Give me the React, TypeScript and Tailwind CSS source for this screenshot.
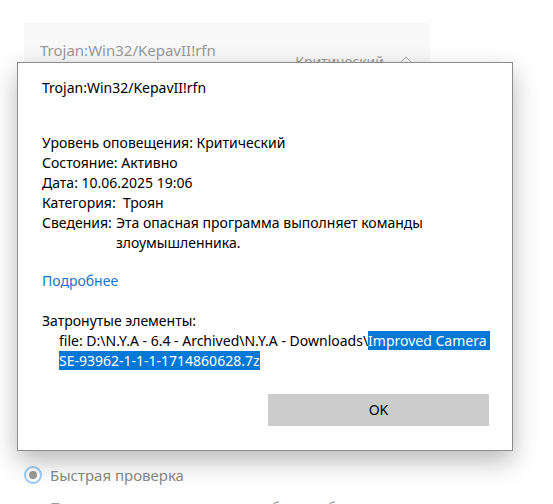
import React from "react";

export default function App() {
  return (
    <div className="relative w-[553px] h-[504px] overflow-hidden bg-white font-['Noto_Sans',sans-serif]">
      {/* background page */}
      <div className="pl-[24px] pt-[23px]">
        <div className="w-[406px] h-[160px] bg-[#f8f8f8] pl-[16px] pr-[16px] pt-[17px] flex justify-between">
          <div className="text-[15px] leading-[20px] text-[#9a9a9a]">Trojan:Win32/KepavII!rfn</div>
          <div className="flex items-start gap-[14px] pt-[12px]">
            <span className="text-[14px] leading-[20px] text-[#9a9a9a]">Критический</span>
            <svg width="16" height="9" viewBox="0 0 16 9" className="mt-[4px]">
              <path d="M1 8 L8 1 L15 8" fill="none" stroke="#b0b0b0" strokeWidth="1" />
            </svg>
          </div>
        </div>
        <div className="mt-[282px] flex items-center gap-[8px]">
          <div className="w-[18px] h-[18px] rounded-full border-2 border-[#9ccaf0] flex items-center justify-center">
            <div className="w-[8px] h-[8px] rounded-full bg-[#9b9b9b]" />
          </div>
          <span className="text-[15px] leading-[20px] text-[#8a8a8a]">Быстрая проверка</span>
        </div>
        <div className="mt-[13px] pl-[26px] text-[14px] leading-[20px] text-[#9a9a9a] whitespace-nowrap">
          Проверка папок в системе, где обычно обнаруживаются угрозы.
        </div>
      </div>

      {/* dialog */}
      <div className="absolute left-[17px] top-[62px] w-[496px] h-[389px] bg-white border border-[#8c8c8c] shadow-[0_10px_24px_rgba(0,0,0,0.28)] flex flex-col pl-[24px] pr-[23px] pt-[15px] text-[14px] leading-[20px] text-black">
        <div>Trojan:Win32/KepavII!rfn</div>
        <div className="mt-[35px]">
          <div>Уровень оповещения: Критический</div>
          <div>Состояние: Активно</div>
          <div>Дата: 10.06.2025 19:06</div>
          <div>Категория:&nbsp; Троян</div>
          <div className="flex">
            <span className="w-[74px] shrink-0">Сведения:</span>
            <span>
              Эта опасная программа выполняет команды
              <br />
              злоумышленника.
            </span>
          </div>
        </div>
        <div className="mt-[18px] text-[#1a73cc]">Подробнее</div>
        <div className="mt-[20px]">Затронутые элементы:</div>
        <div className="pl-[17px] whitespace-nowrap">
          <div>
            file: D:\N.Y.A - 6.4 - Archived\N.Y.A - Downloads\
            <span className="bg-[#0078d7] text-white">Improved Camera&nbsp;</span>
          </div>
          <div>
            <span className="bg-[#0078d7] text-white">SE-93962-1-1-1-1714860628.7z</span>
          </div>
        </div>
        <div className="mt-[23px] self-end w-[221px] h-[32px] bg-[#cccccc] flex items-center justify-center text-black">
          OK
        </div>
      </div>
    </div>
  );
}
